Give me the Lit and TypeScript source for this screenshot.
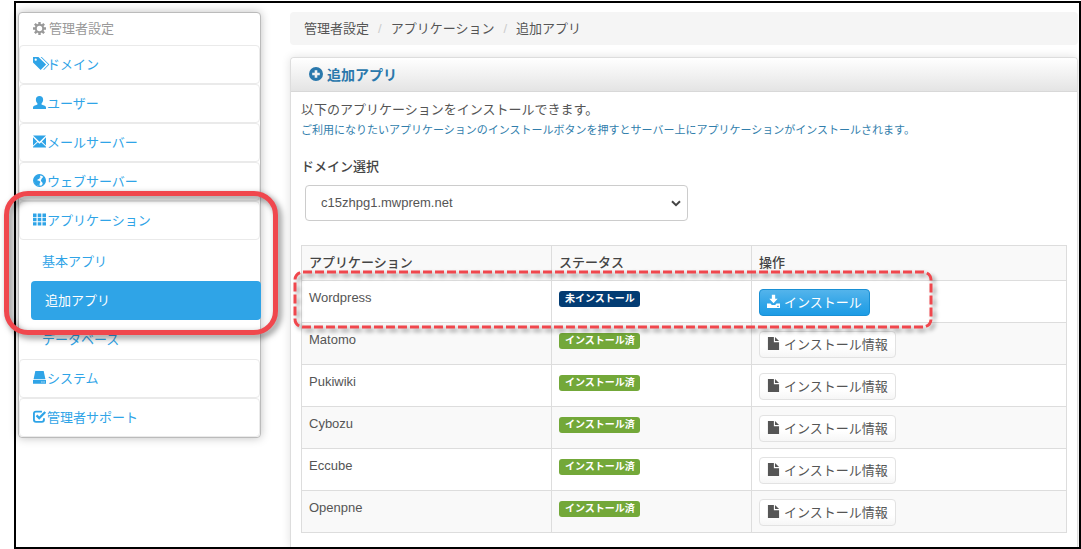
import { LitElement, html, css, svg } from "lit";
import { customElement, state } from "lit/decorators.js";

const icons: Record<string, unknown> = {
  cog: svg`<circle cx="7" cy="7" r="4" fill="none" stroke="currentColor" stroke-width="2.2"/>
    <g stroke="currentColor" stroke-width="2.6">
      <path d="M7 0v2.600M7 11.400v2.600M0 7h2.600M11.400 7h2.600M2 2l2 2M10 10l2 2M2 12l2-2M10 4l2-2"/>
    </g>`,
  tags: svg`<g transform="translate(0 14) scale(.0117 -.0117)"><path fill="currentColor" fill-rule="evenodd" d="M2 700v475q0 11 7 18t18 7h474l700-700l-500-500zM148 953q0-42 30-71q29-30 71-30t71 30q30 29 30 71t-30 71q-29 30-71 30t-71-30q-30-29-30-71zM701 1200h100l700-700l-500-500l-50 50l450 450z"/></g>`,
  user: svg`<path fill="currentColor" d="M7 0c2.400 0 3.900 1.500 3.900 3.700 0 1.700-.6 3.100-1.500 4.100-.4.600-.3 1.400.3 1.700l3 1.100c.9.400 1.300 1 1.300 1.800V14H0v-1.600c0-.8.400-1.400 1.300-1.800l3-1.100c.6-.3.7-1.100.3-1.700-.9-1-1.500-2.400-1.500-4.100C3.100 1.500 4.600 0 7 0z"/>`,
  envelope: svg`<path fill="currentColor" d="M0 .6h14L7 7.400zM0 2.500 4.500 7 0 11.200zM14 2.500 9.500 7l4.500 4.200zM5.200 7.800 7 9.500l1.800-1.700L14 12.700v.7H0v-.7z"/>`,
  globe: svg`<circle cx="7" cy="7" r="6.300" fill="none" stroke="currentColor" stroke-width="1.300"/>
    <path fill="currentColor" d="M.8 6C1 3 3.500.7 6.500.7L8.200 1.500 7.400 2.600l.9.900-1.200.5-.3 1.500-1.700.2-.4 1.200 1.900.3 1.400 1.500-.9 1.700.1 2.600C3.200 12.900.6 10 .8 6zM9.200 5l2.300-2.300c1.600 1.500 2.200 3.800 1.700 6-.5 2-1.700 3.400-3.600 4.200l.8-2.300-.5-1.800-1.500-1.300z"/>`,
  th: svg`<path fill="currentColor" d="M0 .5h3.800v3.900H0zM5.100.5h3.800v3.900H5.100zM10.200.5H14v3.900h-3.800zM0 5h3.800v3.900H0zM5.100 5h3.800v3.900H5.100zM10.200 5H14v3.900h-3.800zM0 10h3.800v3.500H0zM5.100 10h3.800v3.500H5.100zM10.200 10H14v3.500h-3.800z"/>`,
  hdd: svg`<path fill="currentColor" fill-rule="evenodd" d="M2.500 0h9L13.400 8.800H.6zM0 9.800h14v3.900H0zM9 11.200v1.200h1.200v-1.200zM11.300 11.200v1.200h1.200v-1.200z"/>`,
  check: svg`<path fill="none" stroke="currentColor" stroke-width="2" d="M9.600 1.700H3.200Q1 1.700 1 3.900v6.700q0 2.200 2.200 2.200h6.400q2.200 0 2.200-2.200V8.800"/>
    <path fill="none" stroke="currentColor" stroke-width="2.400" d="M3.800 5.800 6.700 8.700 13.200 2.200"/>`,
  plus: svg`<path fill="currentColor" fill-rule="evenodd" d="M7 0a7 7 0 1 0 0 14A7 7 0 0 0 7 0zM5.700 3.200h2.600v2.500h2.500v2.600H8.300v2.500H5.700V8.300H3.200V5.700h2.500z"/>`,
  save: svg`<path fill="currentColor" fill-rule="evenodd" d="M5.200-.4h3.600v4.400h2.700L7 8.800 2.500 4h2.700zM0 9.200h3.800l1.400 1.500h3.600l1.400-1.500H14v4.800H0zM11 11.600v1.200h1.600v-1.200z"/>`,
  file: svg`<path fill="currentColor" d="M1 0h6.400v5.600H13V14H1zM8.600 0 13 4.400H8.600z"/>`,
};

const icon = (name: string) =>
  html`<svg class="icon" viewBox="0 0 14 14" aria-hidden="true">${icons[name]}</svg>`;

interface App {
  name: string;
  installed: boolean;
}

@customElement("app-root")
export class AppRoot extends LitElement {
  @state() private apps: App[] = [
    { name: "Wordpress", installed: false },
    { name: "Matomo", installed: true },
    { name: "Pukiwiki", installed: true },
    { name: "Cybozu", installed: true },
    { name: "Eccube", installed: true },
    { name: "Openpne", installed: true },
  ];

  static styles = css`
    :host {
      display: block;
      box-sizing: border-box;
      min-height: 100vh;
      padding: 1px 0 0 14px;
      background: #fff;
      color: #555;
      font: 13px/18px "Liberation Sans", "Noto Sans CJK JP", sans-serif;
    }
    * { box-sizing: border-box; }
    ul, ol { list-style: none; margin: 0; padding: 0; }
    a { color: #2fa4e7; text-decoration: none; }
    p, h1 { margin: 0; }
    .icon { width: 13px; height: 13px; margin-bottom: 2px; flex: none; overflow: visible; }

    .frame {
      display: grid;
      grid-template-columns: 243px minmax(0, 1fr);
      gap: 29px;
      min-height: calc(100vh - 1px);
      padding: 9px 1px 0 2px;
      border: 2px solid #000;
    }

    .sidebar {
      align-self: start;
      border: 1px solid #bbb;
      border-radius: 4px;
      box-shadow: 0 0 10px rgba(0, 0, 0, 0.25);
      background: #fff;
    }
    .heading {
      display: flex;
      align-items: center;
      gap: 3px;
      height: 32px;
      padding-left: 14px;
      color: #999;
    }
    .item {
      display: flex;
      align-items: center;
      gap: 1px;
      height: 39px;
      padding-left: 13px;
      border: 1px solid #eaeaea;
      border-radius: 4px;
    }
    .group { position: relative; }
    .submenu { padding-top: 2px; }
    .subitem {
      display: flex;
      align-items: center;
      height: 39px;
      padding-left: 23px;
    }
    .subitem.active {
      margin: 0 -1px 0 12px;
      padding-left: 14px;
      border-radius: 4px;
      background: #2fa4e7;
      color: #fff;
    }
    .callout {
      position: absolute;
      inset: -10px -18px 24px -15px;
      border: 5px solid #f0474d;
      border-radius: 24px;
      filter: drop-shadow(3px 3px 3px rgba(0, 0, 0, 0.5));
      pointer-events: none;
      z-index: 1;
    }

    .main { display: flex; flex-direction: column; gap: 12px; }
    .crumbs {
      display: flex;
      align-items: center;
      height: 33px;
      padding: 0 14px;
      border-radius: 4px;
      background: #f5f5f5;
    }
    .crumbs a { color: #555; }
    .crumbs li + li::before { content: "/"; padding: 0 9px; color: #ccc; }

    .panel {
      flex: 1;
      border: 1px solid #ddd;
      border-bottom: 0;
      border-radius: 4px 4px 0 0;
      box-shadow: 0 0 10px rgba(0, 0, 0, 0.12);
    }
    .title {
      display: flex;
      align-items: center;
      gap: 4px;
      height: 34px;
      padding-left: 18px;
      border-bottom: 1px solid #d8d8d8;
      border-radius: 4px 4px 0 0;
      background: linear-gradient(#fff, #e4e4e4);
      color: #2a78ac;
      font-size: 14px;
      font-weight: 700;
    }
    .title .icon { width: 14px; height: 14px; }
    .body { padding: 9px 10px 13px; }
    .hint { margin-top: 2px; color: #317eac; font-size: 11px; }
    .label { display: block; margin-top: 19px; font-weight: 500; color: #444; }
    .picker {
      position: relative;
      width: 50%;
      margin: 9px 0 24px 4px;
    }
    .select {
      display: block;
      width: 100%;
      height: 36px;
      padding: 0 15px;
      border: 1px solid #ccc;
      border-radius: 4px;
      background: #fff;
      color: #555;
      font: inherit;
      appearance: none;
    }
    .chevron {
      position: absolute;
      right: 7px;
      top: 15px;
      width: 10px;
      height: 7px;
      pointer-events: none;
    }

    .tablewrap { position: relative; }
    .table { width: 100%; border-collapse: collapse; table-layout: fixed; }
    .name { width: 250px; }
    .status { width: 200px; }
    th, td {
      height: 42px;
      padding: 8px 7px 0;
      border: 1px solid #ddd;
      text-align: left;
      vertical-align: top;
    }
    th { height: 35px; font-weight: 500; color: #444; background: #f9f9f9; }
    tbody tr:nth-child(even) > * { background: #f9f9f9; }
    .badge {
      display: block;
      width: max-content;
      margin-top: 2px;
      padding: 0 5px 0 6px;
      border-radius: 3px;
      background: #73a839;
      color: #fff;
      font-size: 10px;
      font-weight: 700;
      line-height: 16px;
    }
    .badge.pending { background: #033c73; }
    .button {
      display: flex;
      align-items: center;
      gap: 4px;
      height: 27px;
      padding: 0 7px;
      border: 1px solid #e2e2e2;
      border-radius: 4px;
      background: linear-gradient(#fff 60%, #f6f6f6);
      color: #555;
      font: inherit;
    }
    td { padding-bottom: 6px; }
    .button.primary {
      border-color: #1990d5;
      background: linear-gradient(#54b4eb, #2fa4e7 60%, #1d9ce5);
      color: #fff;
    }
    .marker {
      position: absolute;
      inset: 27px 136px auto -6px;
      height: 55px;
      filter: drop-shadow(3px 3px 2px rgba(0, 0, 0, 0.4));
      pointer-events: none;
    }
    .marker svg { display: block; width: 100%; height: 100%; overflow: visible; }
  `;

  private item(name: string, label: string) {
    return html`<a class="item" href="#">${icon(name)}<span>${label}</span></a>`;
  }

  render() {
    return html`
      <div class="frame">
        <nav class="sidebar" aria-label="管理者設定">
          <div class="heading">${icon("cog")}<span>管理者設定</span></div>
          <ul>
            <li>${this.item("tags", "ドメイン")}</li>
            <li>${this.item("user", "ユーザー")}</li>
            <li>${this.item("envelope", "メールサーバー")}</li>
            <li>${this.item("globe", "ウェブサーバー")}</li>
            <li class="group">
              ${this.item("th", "アプリケーション")}
              <ul class="submenu">
                <li><a class="subitem" href="#">基本アプリ</a></li>
                <li><a class="subitem active" href="#" aria-current="page">追加アプリ</a></li>
                <li><a class="subitem" href="#">データベース</a></li>
              </ul>
              <div class="callout"></div>
            </li>
            <li>${this.item("hdd", "システム")}</li>
            <li>${this.item("check", "管理者サポート")}</li>
          </ul>
        </nav>

        <main class="main">
          <ol class="crumbs">
            <li><a href="#">管理者設定</a></li>
            <li><a href="#">アプリケーション</a></li>
            <li><a href="#">追加アプリ</a></li>
          </ol>
          <section class="panel">
            <h1 class="title">${icon("plus")}<span>追加アプリ</span></h1>
            <div class="body">
              <p>以下のアプリケーションをインストールできます。</p>
              <p class="hint">ご利用になりたいアプリケーションのインストールボタンを押すとサーバー上にアプリケーションがインストールされます。</p>
              <label class="label" for="domain">ドメイン選択</label>
              <div class="picker">
                <select class="select" id="domain">
                  <option>c15zhpg1.mwprem.net</option>
                </select>
                <svg class="chevron" viewBox="0 0 10 7" aria-hidden="true">
                  <path d="M1 1.200 5 5.200 9 1.200" fill="none" stroke="#444" stroke-width="2" />
                </svg>
              </div>
              <div class="tablewrap">
                <table class="table">
                  <thead>
                    <tr>
                      <th class="name">アプリケーション</th>
                      <th class="status">ステータス</th>
                      <th>操作</th>
                    </tr>
                  </thead>
                  <tbody>
                    ${this.apps.map(
                      (app) => html`<tr>
                        <td>${app.name}</td>
                        <td>
                          ${app.installed
                            ? html`<span class="badge">インストール済</span>`
                            : html`<span class="badge pending">未インストール</span>`}
                        </td>
                        <td>
                          ${app.installed
                            ? html`<button class="button" type="button">${icon("file")}インストール情報</button>`
                            : html`<button class="button primary" type="button">${icon("save")}インストール</button>`}
                        </td>
                      </tr>`
                    )}
                  </tbody>
                </table>
                <div class="marker">
                  <svg aria-hidden="true">
                    <rect width="100%" height="100%" rx="8" fill="none" stroke="#f0474d" stroke-width="3" stroke-dasharray="9 3" />
                  </svg>
                </div>
              </div>
            </div>
          </section>
        </main>
      </div>
    `;
  }
}
